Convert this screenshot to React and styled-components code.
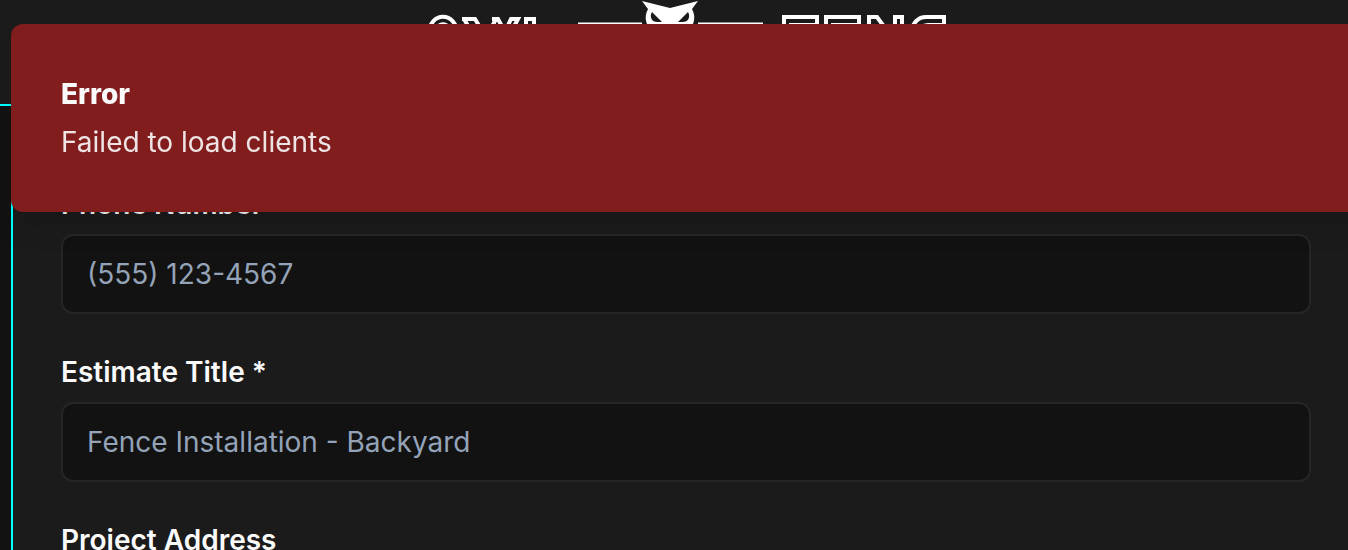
import React from "react";
import styled, { createGlobalStyle } from "styled-components";

const GlobalStyle = createGlobalStyle`
  *, *::before, *::after { box-sizing: border-box; }
  html, body, #root { height: 100%; }
  body {
    margin: 0;
    overflow: hidden;
    background: #121212;
    color: #fafafa;
    font-family: Inter, "Liberation Sans", sans-serif;
    font-size: 28px;
    line-height: 40px;
  }
`;

const Page = styled.div`
  height: 100%;
  overflow: hidden;
`;

const Header = styled.header`
  display: flex;
  justify-content: center;
  height: 106px;
  padding-left: 24px;
  background: #1b1b1b;
  border-bottom: 2px solid #00ffff;
`;

const Logo = styled.svg`
  display: block;
  width: 528px;
  height: 104px;
`;

const Main = styled.main`
  padding-left: 11px;
`;

const Card = styled.form`
  display: flex;
  flex-direction: column;
  gap: 38px;
  padding: 78px 37px 48px 48px;
  border-left: 2px solid #00ffff;
  background: #1b1b1b;
`;

const Field = styled.div`
  display: flex;
  flex-direction: column;
  gap: 10px;
`;

const Label = styled.label`
  font-weight: 600;
`;

const Input = styled.input`
  width: 100%;
  height: 80px;
  padding: 0 24px;
  border: 2px solid #262626;
  border-radius: 12px;
  background: #121212;
  color: #fafafa;
  font: inherit;

  &::placeholder {
    color: #94a3b8;
    opacity: 1;
  }
`;

const Toast = styled.div`
  position: fixed;
  top: 24px;
  left: 11px;
  right: -24px;
  display: flex;
  flex-direction: column;
  gap: 8px;
  padding: 50px;
  border-radius: 12px;
  background: #811d1d;
  box-shadow: 0 20px 30px -6px rgba(0, 0, 0, 0.1), 0 8px 12px -8px rgba(0, 0, 0, 0.1);
`;

const ToastTitle = styled.strong`
  font-weight: 800;
`;

const ToastText = styled.span`
  opacity: 0.9;
`;

const fields = [
  { id: "phone", label: "Phone Number", placeholder: "(555) 123-4567", type: "tel" },
  { id: "title", label: "Estimate Title *", placeholder: "Fence Installation - Backyard", type: "text" },
  { id: "address", label: "Project Address", placeholder: "123 Main Street", type: "text" },
];

function OwlLogo() {
  return (
    <Logo viewBox="422 0 528 104" role="img" aria-label="Owl Fence">
      <g fill="none" stroke="#fff" strokeWidth="4">
        <path d="M429 34C429 11 457 11 457 34M436 34C436 21 450 21 450 34" />
        <path d="M462 19H475L484 34M488 34L496 19M464 19L475 38M492 19H498L506 34M504 34L511 19H518L508 38" />
        <path d="M526 40V19H534V40" />
        <path d="M578 24H642M698 24H763" strokeWidth="3" />
        <path d="M784 40V17H817V25H791V40M826 40V17H859V25H833V40" />
        <path d="M869 40V17H877L891 36M895 40V17H902V40M875 26L887 40" />
        <path d="M910 32C914 22 918 17 926 17H944V25H928C921 25 918 30 916 34" />
      </g>
      <path
        d="M642 1L670 8L698 1L692 9C697 18 694 29 682 34H658C646 29 643 18 648 9Z"
        fill="#fff"
      />
      <path d="M652 12C649 17 652 23 659 22H662ZM688 12C691 17 688 23 681 22H678Z" fill="#1b1b1b" />
    </Logo>
  );
}

export default function App() {
  return (
    <Page>
      <GlobalStyle />
      <Header>
        <OwlLogo />
      </Header>
      <Main>
        <Card>
          {fields.map(({ id, label, ...input }) => (
            <Field key={id}>
              <Label htmlFor={id}>{label}</Label>
              <Input id={id} {...input} />
            </Field>
          ))}
        </Card>
      </Main>
      <Toast role="alert">
        <ToastTitle>Error</ToastTitle>
        <ToastText>Failed to load clients</ToastText>
      </Toast>
    </Page>
  );
}
